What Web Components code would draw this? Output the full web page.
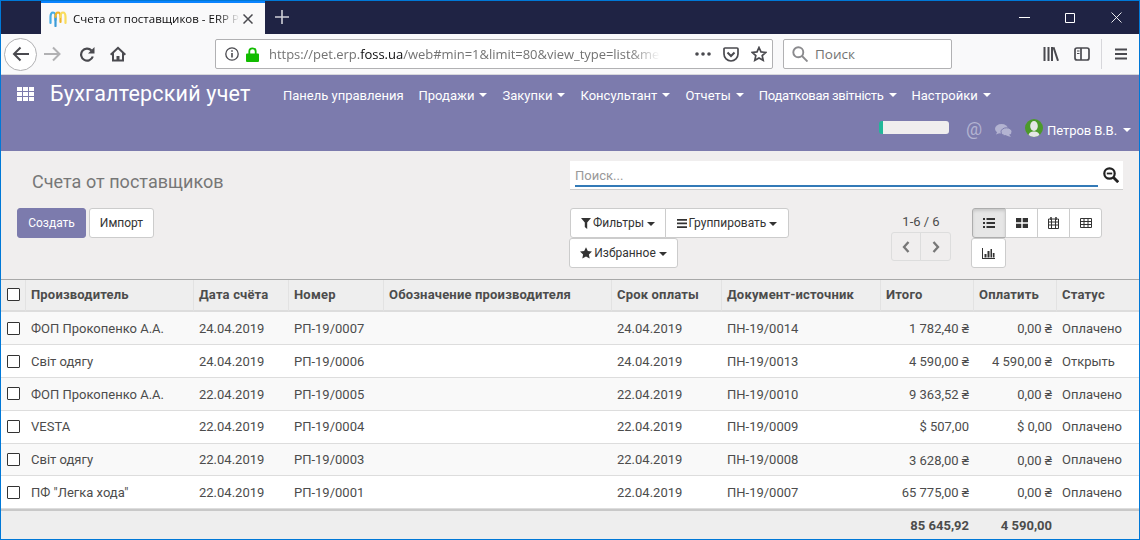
<!DOCTYPE html>
<html><head><meta charset="utf-8"><style>
html,body{margin:0;padding:0;width:1140px;height:540px;overflow:hidden;background:#f0eeee}
body{font-family:Roboto,"Noto Sans",sans-serif}
</style></head><body>
<erp-window></erp-window>
<script>
function def(name,html){
  customElements.define(name,class extends HTMLElement{
    constructor(){super();this.attachShadow({mode:'open'}).innerHTML=html;}
  });
}
const caret=c=>`<svg width="8" height="4" viewBox="0 0 8 4" style="display:inline-block;vertical-align:middle"><path d="M0 0h8L4 4z" fill="${c||'currentColor'}"/></svg>`;

def('erp-titlebar',`<style>
:host{display:flex;height:33px;background:#1f2344;align-items:stretch}
.tab{margin-left:40px;width:224px;background:#f9f9fa;border-top:2px solid #0a84ff;box-sizing:border-box;display:flex;align-items:center;font:11.500px "Open Sans",sans-serif;color:#0c0c0d}
.logo{margin:0 6px 0 8px;flex:none}
.t{flex:1;min-width:0;white-space:nowrap;overflow:hidden;-webkit-mask-image:linear-gradient(90deg,#000 86%,transparent);mask-image:linear-gradient(90deg,#000 86%,transparent)}
.x{margin:0 12px 0 3px;flex:none}
.plus{margin:9px 0 0 10px}
.sp{flex:1}
.w{width:46px;display:flex;align-items:center;justify-content:center}
</style>
<div class="tab"><svg class="logo" width="18" height="16" viewBox="0 0 18 16" fill="none" stroke-width="2.200" stroke-linecap="round"><path d="M1.500 12V6Q1.500 1.500 4 1.500T6.500 6V9" stroke="#45ace6"/><path d="M6.500 15V6" stroke="#3d9cd8"/><path d="M6.500 6Q6.500 1.500 9 1.500T11.500 6V11" stroke="#f0b429"/><path d="M11.500 6Q11.500 1.500 14 1.500T16.500 6V12" stroke="#f9dc5c"/></svg><span class="t">Счета от поставщиков - ERP Pet</span><svg class="x" width="10" height="10" viewBox="0 0 10 10"><path d="M.5.5l9 9M9.500.5l-9 9" stroke="#4a4a4f" stroke-width="1.500"/></svg></div>
<svg class="plus" width="14" height="14" viewBox="0 0 14 14"><path d="M7 0v14M0 7h14" stroke="#cfd0d8" stroke-width="1.600"/></svg>
<span class="sp"></span>
<div class="w"><svg width="11" height="11" viewBox="0 0 11 11"><path d="M0 5.500h11" stroke="#fff"/></svg></div>
<div class="w"><svg width="10" height="10" viewBox="0 0 10 10"><path d="M.5.5h9v9h-9z" fill="none" stroke="#fff"/></svg></div>
<div class="w"><svg width="11" height="11" viewBox="0 0 11 11"><path d="M.5.500l10 10M10.500.500l-10 10" stroke="#fff" stroke-width=".9"/></svg></div>`);

def('erp-toolbar',`<style>
:host{display:flex;height:41px;background:#f9f9fa;align-items:center;box-sizing:border-box;border-bottom:1px solid #d7d7db;font-family:"Open Sans",sans-serif}
.back{width:33px;height:33px;border:1px solid #b1b1b3;border-radius:50%;background:#fff;display:flex;align-items:center;justify-content:center;margin-left:3px;box-sizing:border-box;flex:none}
.ic{flex:none;display:flex}
.url{margin-left:89px;width:558px;height:30px;box-sizing:border-box;background:#fff;border:1px solid #b1b1b3;border-radius:2px;display:flex;align-items:center;font-size:13px;letter-spacing:-.03px;color:#737373;flex:none}
.addr{margin-left:10px;width:391px;flex:none;white-space:nowrap;overflow:hidden;-webkit-mask-image:linear-gradient(90deg,#000 92%,transparent);mask-image:linear-gradient(90deg,#000 92%,transparent)}
.addr b{font-weight:400;color:#0c0c0d}
.find{margin-left:10px;width:169px;height:30px;box-sizing:border-box;background:#fff;border:1px solid #b1b1b3;border-radius:2px;display:flex;align-items:center;font-size:13.500px;color:#737373;flex:none}
.sep{width:1px;height:30px;background:#d7d7db;flex:none}
</style>
<div class="back"><svg width="18" height="16" viewBox="0 0 18 16" fill="none" stroke="#4a4a4f" stroke-width="2"><path d="M17 8H2M8.500 1.500L2 8l6.500 6.500"/></svg></div>
<svg class="ic" style="margin-left:7px" width="18" height="16" viewBox="0 0 18 16" fill="none" stroke="#b1b1b3" stroke-width="2"><path d="M0 8h15.500M9 1.500L15.500 8 9 14.500"/></svg>
<svg class="ic" style="margin-left:17px" width="16" height="16" viewBox="0 0 16 16" fill="none" stroke="#4a4a4f" stroke-width="2.200"><path d="M13.800 10.500A6 6 0 1 1 12.500 4.500"/><path d="M15.500 1v6.500H9z" fill="#4a4a4f" stroke="none"/></svg>
<svg class="ic" style="margin-left:15px" width="16" height="16" viewBox="0 0 16 16" fill="#4a4a4f"><path fill-rule="evenodd" d="M8 .5L16 8l-1.300 1.400-.7-.7V15.500H2V8.700l-.7.7L0 8zM8 3.300L4 7v6.500h2.500V10h3v3.500H12V7z"/></svg>
<div class="url">
<svg style="margin-left:9px;flex:none" width="14" height="14" viewBox="0 0 14 14" fill="none" stroke="#4a4a4f" stroke-width="1.300"><circle cx="7" cy="7" r="6.200"/><path d="M7 6v4.500M7 3.300v1.500" stroke-width="1.600"/></svg>
<svg style="margin-left:7px;flex:none" width="13" height="15" viewBox="0 0 13 15"><path d="M1 6.500h11a1 1 0 0 1 1 1V14a1 1 0 0 1-1 1H1a1 1 0 0 1-1-1V7.500a1 1 0 0 1 1-1z" fill="#12bc00"/><path d="M3.300 7V4.500a3.200 3.200 0 0 1 6.400 0V7" fill="none" stroke="#12bc00" stroke-width="1.800"/></svg>
<span class="addr">https://pet.erp.<b>foss.ua</b>/web#min=1&amp;limit=80&amp;view_type=list&amp;menu_id=1</span>
<svg style="margin-left:35px;flex:none" width="16" height="4" viewBox="0 0 16 4" fill="#4a4a4f"><circle cx="2" cy="2" r="1.800"/><circle cx="8" cy="2" r="1.800"/><circle cx="14" cy="2" r="1.800"/></svg>
<svg style="margin-left:12px;flex:none" width="16" height="15" viewBox="0 0 16 15" fill="none" stroke="#4a4a4f" stroke-width="1.700"><path d="M1 2a1 1 0 0 1 1-1h12a1 1 0 0 1 1 1v5a7 7 0 0 1-14 0z"/><path d="M4.500 5.500L8 9l3.500-3.500" stroke-width="2"/></svg>
<svg style="margin-left:12px;flex:none" width="16" height="16" viewBox="0 0 16 16" fill="none" stroke="#4a4a4f" stroke-width="1.700"><path d="M8 1.500l2 4.400 4.800.5-3.600 3.200 1 4.700L8 11.900l-4.200 2.400 1-4.700L1.200 6.400 6 5.900z"/></svg>
</div>
<div class="find"><svg style="margin-left:8px;flex:none" width="16" height="16" viewBox="0 0 16 16" fill="none" stroke="#8a8a8d" stroke-width="1.900"><circle cx="6.300" cy="6.300" r="5"/><path d="M10 10l5.500 5.500"/></svg><span style="margin-left:7px">Поиск</span></div>
<svg class="ic" style="margin-left:91px" width="16" height="14" viewBox="0 0 16 14" fill="none" stroke="#4a4a4f" stroke-width="2"><path d="M1.500 0v14M5.500 0v14M9 0v14M10.500.300l4.500 13.500"/></svg>
<svg class="ic" style="margin-left:15px" width="16" height="14" viewBox="0 0 16 14" fill="none" stroke="#4a4a4f" stroke-width="1.700"><rect x="1" y="1" width="14" height="12" rx="2"/><path d="M7 1v12"/><path d="M3 4h2.500M3 6.500h2.500" stroke-width="1.100"/></svg>
<span class="sep" style="margin-left:11px"></span>
<svg class="ic" style="margin-left:13px" width="12" height="12" viewBox="0 0 12 12" stroke="#4a4a4f" stroke-width="1.800"><path d="M0 1.500h12M0 6h12M0 10.500h12"/></svg>`);

def('erp-menu-item',`<style>
:host{display:inline-flex;align-items:center;padding:0 7.500px;color:#fff;font-size:13px;white-space:nowrap}
svg{margin-left:5px}
</style><slot></slot>${caret('#fff')}`);
def('erp-menu-plain',`<style>:host{display:inline-flex;padding:0 7.500px;color:#fff;font-size:13px;white-space:nowrap}</style><slot></slot>`);

def('erp-nav',`<style>
:host{display:flex;flex-direction:column;height:76px;background:#7c7bad;box-sizing:border-box;padding-left:16px}
.top{display:flex;align-items:center;height:36px;padding-top:0;margin-top:2px}
.apps{display:grid;grid-template-columns:repeat(3,5px);gap:1px;flex:none;margin-top:-3px}
.apps i{height:4px;background:#fff;display:block}
.brand{margin-left:16px;font-size:21.500px;color:#fff;width:225.500px;flex:none;white-space:nowrap;letter-spacing:.2px;margin-top:-4px}
.bot{display:flex;align-items:center;justify-content:flex-end;height:24px;margin-top:5px;padding-right:8px;color:#fff;font-size:13px}
.prog{width:70px;height:13px;border-radius:3px;background:#f0eeee;border-left:4px solid #21b799;box-sizing:border-box;margin-right:17px;margin-top:-5px}
.av{width:18px;height:18px;border-radius:50%;background:#4c9a2a;margin-left:13px;overflow:hidden;margin-top:-4px}
</style>
<div class="top"><div class="apps"><i></i><i></i><i></i><i></i><i></i><i></i><i></i><i></i><i></i></div><div class="brand">Бухгалтерский учет</div>
<erp-menu-plain>Панель управления</erp-menu-plain><erp-menu-item>Продажи</erp-menu-item><erp-menu-item>Закупки</erp-menu-item><erp-menu-item>Консультант</erp-menu-item><erp-menu-item>Отчеты</erp-menu-item><erp-menu-item style="letter-spacing:-.3px">Податковая звітність</erp-menu-item><erp-menu-item>Настройки</erp-menu-item></div>
<div class="bot"><div class="prog"></div>
<span style="font-size:18px;color:#b3b3d1;line-height:18px;margin-top:-2px">@</span>
<svg style="margin-left:13px" width="17" height="13" viewBox="0 0 17 13" fill="#b3b3d1"><ellipse cx="6.500" cy="4.800" rx="6.500" ry="4.800"/><path d="M2.500 7.500L1 10.500l5-2z"/><ellipse cx="11.500" cy="7.800" rx="5.500" ry="4" stroke="#7c7bad"/><path d="M14 10.500l2 2.500-5-1.500z"/></svg>
<div class="av"><svg width="18" height="18" viewBox="0 0 18 18"><ellipse cx="9" cy="7" rx="3.800" ry="5" fill="#e6e6e6"/><path d="M3 18c1-5 3-5.500 6-5.500s5 .5 6 5.500z" fill="#e6e6e6"/></svg></div>
<span style="margin:0 0 0 4px;letter-spacing:-.08px">Петров В.В.</span><span style="margin-left:6px;display:flex">${caret('#fff')}</span></div>`);

def('erp-button',`<style>
:host{display:inline-flex;align-items:center;justify-content:center;box-sizing:border-box;height:30px;background:#fff;border:1px solid #ccc;border-radius:3px;color:#333;font-size:12px;padding:0 10px;white-space:nowrap}
:host([primary]){background:#7c7bad;border-color:#7c7bad;color:#fff}
:host([flat-left]){border-top-left-radius:0;border-bottom-left-radius:0;margin-left:-1px}
:host([flat-right]){border-top-right-radius:0;border-bottom-right-radius:0}
:host([active]){background:#e6e6e6;box-shadow:inset 0 2px 3px rgba(0,0,0,.13);border-color:#adadad}
</style><slot></slot>`);

def('erp-control-panel',`<style>
:host{display:block;height:129px;box-sizing:border-box;background:#f0eeee;border-bottom:1px solid #a8a8a8}
.row1{display:flex;padding:10px 16px 0 31px;height:39px;box-sizing:border-box}
h1{margin:0;font-weight:400;font-size:18px;color:#777;line-height:42px;letter-spacing:.03px;flex:1}
.search{width:553px;height:29px;background:#fff;border-bottom:1px solid #ccc;box-sizing:border-box;display:flex;padding:0 5px;align-items:flex-start}
.inp{width:523px;height:26px;box-sizing:border-box;border-bottom:2px solid #337ab7;font-size:13px;color:#999;line-height:29px;flex:none}
.sicon{margin:6px 0 0 5px;flex:none}
.row2{display:flex;margin-top:18px;padding-left:16px}
.left{width:552px;display:flex;gap:3px;flex:none}
.g{display:flex}
.facets{margin-left:1px;width:239px;flex:none}
.pager{margin-left:64px;width:96px;flex:none;text-align:center;font-size:13px;color:#4c4c4c;display:flex;flex-direction:column;align-items:center}
.pt{height:24px;line-height:28px}
.pb{display:flex}
.mid{display:flex;flex:none;width:403px}
.views{width:132px;display:flex;flex-wrap:wrap;align-content:flex-start}
svg{display:block}
</style>
<div class="row1"><h1>Счета от поставщиков</h1><div class="search"><div class="inp">Поиск...</div><svg class="sicon" width="16" height="16" viewBox="0 0 16 16" fill="none" stroke="#222" stroke-width="2.200"><circle cx="6.500" cy="6.500" r="5.200"/><path d="M10.500 10.500l4.700 4.700" stroke-width="2.800"/><path d="M3.800 6.500h5.400" stroke-width="1.800"/></svg></div></div>
<div class="row2">
<div class="left"><erp-button primary style="width:69px">Создать</erp-button><erp-button style="width:65px">Импорт</erp-button></div>
<div class="mid">
<div class="facets">
<div class="g"><erp-button flat-right style="width:96px;padding:0"><svg width="10" height="11" viewBox="0 0 10 11" fill="#333" style="margin-right:2px"><path d="M0 0h10L6.200 4.500V11L3.800 9V4.500z"/></svg>Фильтры<span style="margin-left:3px">${caret('#333')}</span></erp-button><erp-button flat-left style="width:124px;padding:0"><svg width="10" height="9" viewBox="0 0 10 9" fill="#333" style="margin-right:2px"><path d="M0 0h10v1.700H0zM0 3.600h10v1.700H0zM0 7.300h10V9H0z"/></svg>Группировать<span style="margin-left:3px">${caret('#333')}</span></erp-button></div>
<div class="g" style="margin-left:-1px"><erp-button style="width:109px;padding:0"><svg width="12" height="12" viewBox="0 0 12 12" fill="#333" style="margin-right:2px"><path d="M6 .3l1.800 3.800 4.200.5-3.100 2.900.8 4.100L6 9.600l-3.700 2 .8-4.100L0 4.600l4.200-.5z"/></svg>Избранное<span style="margin-left:3px">${caret('#333')}</span></erp-button></div>
</div>
<div class="pager"><div class="pt">1-6 / 6</div><div class="pb">
<erp-button flat-right style="width:30px;height:29px;padding:0;background:#f0eeee;border-color:#ddd"><svg width="8" height="12" viewBox="0 0 8 12" fill="none" stroke="#777" stroke-width="2.300"><path d="M6.500 1L2 6l4.500 5"/></svg></erp-button><erp-button flat-left style="width:31px;height:29px;padding:0;background:#f0eeee;border-color:#ddd"><svg width="8" height="12" viewBox="0 0 8 12" fill="none" stroke="#777" stroke-width="2.300"><path d="M1.500 1L6 6l-4.500 5"/></svg></erp-button></div></div>
</div>
<div class="views">
<erp-button active flat-right style="width:34px;padding:0"><svg width="12" height="10" viewBox="0 0 12 10" fill="#333"><path d="M0 0h2v2H0zM3.500 0H12v2H3.500zM0 4h2v2H0zM3.500 4H12v2H3.500zM0 8h2v2H0zM3.500 8H12v2H3.500z"/></svg></erp-button>
<erp-button flat-left flat-right style="width:33px;padding:0"><svg width="12" height="10" viewBox="0 0 12 10" fill="#333"><path d="M0 0h5.300v4.300H0zM6.700 0H12v4.300H6.700zM0 5.700h5.300V10H0zM6.700 5.700H12V10H6.700z"/></svg></erp-button>
<erp-button flat-left flat-right style="width:33px;padding:0"><svg width="11" height="12" viewBox="0 0 11 12" fill="none" stroke="#333"><path d="M.5 2h10v9.500H.5zM.5 5h10M.5 8h10M3.500 2v9.500M7.500 2v9.500"/><path d="M3 0v3M8 0v3" stroke-width="1.500"/></svg></erp-button>
<erp-button flat-left style="width:33px;padding:0"><svg width="12" height="10" viewBox="0 0 12 10" fill="none" stroke="#333"><path d="M.5.500h11v9H.5zM.5 3.500h11M.5 6.500h11M4 .5v9M8 .5v9"/></svg></erp-button>
<erp-button style="width:35px;padding:0;margin-left:-1px"><svg width="13" height="11" viewBox="0 0 13 11" fill="#333"><path d="M0 0h1v10h12v1H0zM2.500 6h2v3.500h-2zM5.500 3h2v6.500h-2zM8.500 1h1.500v8.500H8.500zM10.800 5h1.700v4.500h-1.700z"/></svg></erp-button>
</div></div>`);

const cols=[24,168,95,95,228,110,159,93,83,83];
const rows=[
['ФОП Прокопенко А.А.','24.04.2019','РП-19/0007','','24.04.2019','ПН-19/0014','1 782,40 ₴','0,00 ₴','Оплачено'],
['Світ одягу','24.04.2019','РП-19/0006','','24.04.2019','ПН-19/0013','4 590,00 ₴','4 590,00 ₴','Открыть'],
['ФОП Прокопенко А.А.','22.04.2019','РП-19/0005','','22.04.2019','ПН-19/0010','9 363,52 ₴','0,00 ₴','Оплачено'],
['VESTA','22.04.2019','РП-19/0004','','22.04.2019','ПН-19/0009','$ 507,00','$ 0,00','Оплачено'],
['Світ одягу','22.04.2019','РП-19/0003','','22.04.2019','ПН-19/0008','3 628,00 ₴','0,00 ₴','Оплачено'],
['ПФ "Легка хода"','22.04.2019','РП-19/0001','','22.04.2019','ПН-19/0007','65 775,00 ₴','0,00 ₴','Оплачено']];
const heads=['Производитель','Дата счёта','Номер','Обозначение производителя','Срок оплаты','Документ-источник','Итого','Оплатить','Статус'];
def('erp-check',`<style>:host{display:block;width:13px;height:13px;border:1px solid #333;background:#fff;box-sizing:border-box;border-radius:1px}</style>`);
def('erp-list',`<style>
:host{display:block;font-size:13px;color:#4c4c4c}
table{border-collapse:separate;border-spacing:0;table-layout:fixed;width:1138px}
th,td{padding:0 5px 0 6px;text-align:left;white-space:nowrap;overflow:hidden;box-sizing:border-box}
th{height:32.400px;background:#eeeeee;font-weight:700;border-bottom:2px solid #dddddd;border-left:1px solid #e2e2e2;font-size:13px;letter-spacing:.18px;padding-bottom:1.500px;padding-left:5px}
th:first-child{border-left:0;padding-bottom:1px}
td{height:32.800px;border-bottom:1px solid #dddddd;background:#fff;padding-top:.4px}
tr:nth-child(odd) td{background:#f9f9f9}
td.r{text-align:right;padding-right:4px}
.c{padding:0 0 0 6px}
tfoot td{height:31px;background:#eeeeee!important;border-top:2px solid #c8c8c8;border-bottom:0;font-weight:700;padding-top:0}
</style><table><colgroup>${cols.map(w=>`<col style="width:${w}px">`).join('')}</colgroup>
<thead><tr><th class="c"><erp-check></erp-check></th>${heads.map(h=>`<th>${h}</th>`).join('')}</tr></thead>
<tbody>${rows.map(r=>`<tr><td class="c"><erp-check></erp-check></td>${r.map((v,i)=>`<td class="${i==6||i==7?'r':''}">${v}</td>`).join('')}</tr>`).join('')}</tbody>
<tfoot><tr><td colspan="7"></td><td class="r">85 645,92</td><td class="r">4 590,00</td><td></td></tr></tfoot>
</table>`);

def('erp-window',`<style>
:host{display:block;width:1140px;height:540px;box-sizing:border-box;border:1px solid #0078d7;overflow:hidden}
</style><erp-titlebar></erp-titlebar><erp-toolbar></erp-toolbar><erp-nav></erp-nav><erp-control-panel></erp-control-panel><erp-list></erp-list>`);
</script></body></html>
